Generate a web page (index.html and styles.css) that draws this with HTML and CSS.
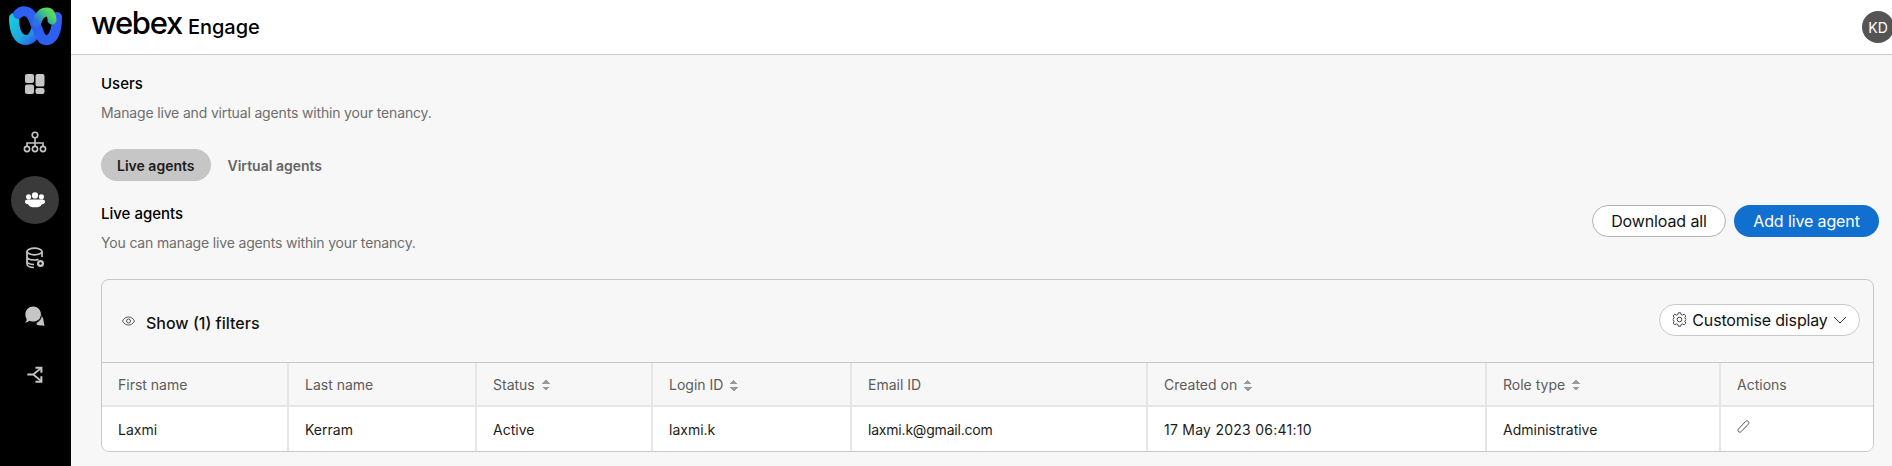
FILE: index.html
```html
<!DOCTYPE html>
<html lang="en">
<head>
    <meta charset="UTF-8">
    <title>Webex Engage - Users</title>
    <link rel="stylesheet" href="styles.css">
</head>
<body>

<div class="app">
    <nav class="sidebar">
        <div class="logo">
            <svg width="54" height="42" viewBox="0 0 54 42" fill="none">
                <defs>
                    <linearGradient id="logo-cyan" x1="0" y1="0" x2="1" y2="1">
                        <stop offset="0" stop-color="#18c8dc"/>
                        <stop offset="0.6" stop-color="#1ea8e0"/>
                        <stop offset="1" stop-color="#2a62ee"/>
                    </linearGradient>
                    <linearGradient id="logo-green" x1="0" y1="1" x2="1" y2="0.3">
                        <stop offset="0" stop-color="#2f6fe0"/>
                        <stop offset="0.5" stop-color="#2fb09a"/>
                        <stop offset="1" stop-color="#58d860"/>
                    </linearGradient>
                </defs>
                <path d="M6 13C6 26 10 35 18 35C23 35 26 31 28 25" stroke="url(#logo-cyan)" stroke-width="10" stroke-linecap="round"/>
                <path d="M10 9C15 4 22 6 25 13L31 28C33 33 36 36 40 35C46 33 49 24 49 12" stroke="#2d5ff0" stroke-width="10" stroke-linecap="round"/>
                <path d="M29 17C31 10 35 7 39 7C42 7 44 10 44 15" stroke="url(#logo-green)" stroke-width="9" stroke-linecap="round"/>
            </svg>
        </div>
        <a class="nav-item">
            <svg width="22" height="22" viewBox="0 0 22 22" fill="#c6c6c6">
                <rect x="1" y="1" width="9" height="9" rx="2"/>
                <rect x="11.500" y="1" width="9" height="12.500" rx="2"/>
                <rect x="1" y="11.500" width="9" height="9.500" rx="2"/>
                <rect x="11.500" y="15" width="9" height="6" rx="2"/>
            </svg>
        </a>
        <a class="nav-item">
            <svg width="24" height="22" viewBox="0 0 24 22" fill="none" stroke="#c6c6c6" stroke-width="1.600">
                <circle cx="12" cy="4" r="2.800"/>
                <path d="M12 7V12M4 15V12H20V15M12 12V15"/>
                <circle cx="4" cy="18" r="2.600"/>
                <circle cx="12" cy="18" r="2.600"/>
                <circle cx="20" cy="18" r="2.600"/>
            </svg>
        </a>
        <a class="nav-item active">
            <span class="nav-circle">
                <svg width="22" height="18" viewBox="0 0 24 18" fill="#fff">
                    <circle cx="12" cy="4" r="3.400"/>
                    <circle cx="5" cy="5.500" r="2.800"/>
                    <circle cx="19" cy="5.500" r="2.800"/>
                    <path d="M1 10.500C1 9 3 8.500 5 8.500H19C21 8.500 23 9 23 10.500C23 12.500 21.500 13.500 19.500 13.500C18.500 16 15.500 17 12 17C8.500 17 5.500 16 4.500 13.500C2.500 13.500 1 12.500 1 10.500Z"/>
                </svg>
            </span>
        </a>
        <a class="nav-item">
            <svg width="20" height="22" viewBox="0 0 20 22" fill="none" stroke="#c6c6c6" stroke-width="1.700">
                <ellipse cx="9.500" cy="4.500" rx="7.500" ry="3.300"/>
                <path d="M2 4.500V17C2 19 5 20.500 9 20.500M17 4.500V10M2 9.500C2 11.500 5 13 9.500 13C11 13 12.500 12.800 13.500 12.400M2 14C2 16 5 17.500 9 17.500"/>
                <circle cx="15.500" cy="16.500" r="3.500" fill="#c6c6c6" stroke="none"/>
                <circle cx="15.500" cy="16.500" r="1.200" fill="#000" stroke="none"/>
            </svg>
        </a>
        <a class="nav-item">
            <svg width="22" height="22" viewBox="0 0 24 24">
                <path d="M22.500 22.500L16 22C14 22 13 21 14 19C17 17 19 14 19 11L21 15C21.500 18 21.500 20 22.500 22.500Z" fill="#c6c6c6"/>
                <path d="M1 19C2.500 18 3 17 2.800 15C1.800 13.500 1.500 11.500 1.500 10C1.500 5 5.500 1.500 10 1.500C14.500 1.500 18.500 5 18.500 10C18.500 14.500 15 18 10 18C8 18 6.500 17.800 5.500 17.200C4.500 18.500 3 19.200 1 19Z" fill="#c6c6c6"/>
                <path d="M19 12C18.500 15.500 16.500 18 13.500 19" fill="none" stroke="#000" stroke-width="1"/>
            </svg>
        </a>
        <a class="nav-item">
            <svg width="18" height="17" viewBox="0 0 20 20" fill="none" stroke="#c6c6c6" stroke-width="2.200">
                <path d="M1 10H8L17 2.500M8 10L17 17.500"/>
                <path d="M10.500 2H17.500V8M17.500 12V18.500H10.500" stroke-width="2.400"/>
            </svg>
        </a>
    </nav>

    <div class="main">
        <header class="topbar">
            <div class="brand">
                <span class="wordmark">webex</span>
                <span class="product">Engage</span>
            </div>
            <div class="avatar">KD</div>
        </header>

        <div class="content">
            <h2 class="page-title">Users</h2>
            <p class="page-desc">Manage live and virtual agents within your tenancy.</p>

            <div class="tabs">
                <button class="tab tab-active">Live agents</button>
                <button class="tab">Virtual agents</button>
            </div>

            <div class="section-head">
                <div>
                    <h3 class="section-title">Live agents</h3>
                    <p class="section-desc">You can manage live agents within your tenancy.</p>
                </div>
                <div class="section-actions">
                    <button class="btn btn-outline">Download all</button>
                    <button class="btn btn-primary">Add live agent</button>
                </div>
            </div>

            <div class="card">
                <div class="card-head">
                    <div class="filters">
                        <svg class="eye" width="13" height="10" viewBox="0 0 13 10" fill="none" stroke="#444" stroke-width="0.900">
                            <path d="M0.500 5C2 2.200 4 1 6.500 1C9 1 11 2.200 12.500 5C11 7.800 9 9 6.500 9C4 9 2 7.800 0.500 5Z"/>
                            <circle cx="6.500" cy="5" r="2"/>
                        </svg>
                        <span>Show (1) filters</span>
                    </div>
                    <button class="customise">
                        <svg width="15" height="15" viewBox="0 0 15 15" fill="none" stroke="#444" stroke-width="1">
                            <circle cx="7.500" cy="7.500" r="2.300"/>
                            <path d="M6.300 0.800H8.700L9.100 2.500L10.600 3.100L12.100 2.200L13.800 3.900L12.900 5.400L13.500 6.900L14.200 7.500L13.500 8.100L12.900 9.600L13.800 11.100L12.100 12.800L10.600 11.900L9.100 12.500L8.700 14.200H6.300L5.900 12.500L4.400 11.900L2.900 12.800L1.200 11.100L2.100 9.600L1.500 8.100L0.800 7.500L1.500 6.900L2.100 5.400L1.200 3.900L2.900 2.200L4.400 3.100L5.900 2.500Z"/>
                        </svg>
                        <span>Customise display</span>
                        <svg width="14" height="8" viewBox="0 0 14 8" fill="none" stroke="#333" stroke-width="1">
                            <path d="M1 1L7 7L13 1"/>
                        </svg>
                    </button>
                </div>

                <table class="users-table">
                    <colgroup>
                        <col class="col-first">
                        <col class="col-last">
                        <col class="col-status">
                        <col class="col-login">
                        <col class="col-email">
                        <col class="col-created">
                        <col class="col-role">
                        <col class="col-actions">
                    </colgroup>
                    <thead>
                        <tr>
                            <th>First name</th>
                            <th>Last name</th>
                            <th>Status<span class="sort"></span></th>
                            <th>Login ID<span class="sort"></span></th>
                            <th>Email ID</th>
                            <th>Created on<span class="sort"></span></th>
                            <th>Role type<span class="sort"></span></th>
                            <th>Actions</th>
                        </tr>
                    </thead>
                    <tbody>
                        <tr>
                            <td>Laxmi</td>
                            <td>Kerram</td>
                            <td>Active</td>
                            <td>laxmi.k</td>
                            <td class="cell-email">laxmi.k@gmail.com</td>
                            <td class="cell-date">17 May 2023 06:41:10</td>
                            <td>Administrative</td>
                            <td>
                                <svg class="edit" width="13" height="13" viewBox="0 0 13 13" fill="none" stroke="#444" stroke-width="0.900">
                                    <path d="M1.500 9L8.500 1.500C9.300 0.700 10.500 0.700 11.300 1.500C12.100 2.300 12.100 3.400 11.300 4.200L4.300 11.500C3.500 12.300 2.300 12.500 1.500 11.700C0.800 11 0.800 9.800 1.500 9Z"/>
                                </svg>
                            </td>
                        </tr>
                    </tbody>
                </table>
            </div>
        </div>
    </div>
</div>

</body>
</html>
```

FILE: styles.css
```css
* {
    box-sizing: border-box;
}

html, body {
    height: 100%;
    margin: 0;
    overflow: hidden;
}

body {
    font-family: 'Inter', 'Liberation Sans', sans-serif;
    background-color: #f7f7f7;
    color: #121212;
}

.app {
    display: flex;
    height: 100%;
}

/* left nav */
.sidebar {
    width: 71px;
    flex-shrink: 0;
    padding-right: 1px;
    background-color: #000;
}

.logo {
    height: 55px;
    display: flex;
    justify-content: center;
    padding-top: 5px;
}

.nav-item {
    height: 58px;
    display: flex;
    align-items: center;
    justify-content: center;
}

.nav-circle {
    width: 48px;
    height: 48px;
    border-radius: 50%;
    background-color: #3a3a3a;
    display: flex;
    align-items: center;
    justify-content: center;
}

.main {
    flex: 1;
    min-width: 0;
    display: flex;
    flex-direction: column;
}

/* top bar */
.topbar {
    height: 55px;
    background-color: #fff;
    border-bottom: 1px solid #c8c8c8;
    display: flex;
    align-items: center;
    justify-content: space-between;
}

.brand {
    display: flex;
    align-items: baseline;
    margin-left: 20px;
    margin-top: -10px;
    gap: 6px;
}

.wordmark {
    font-size: 31px;
    font-weight: 500;
    letter-spacing: -1.300px;
    color: #000;
}

.product {
    font-size: 20px;
    font-weight: 500;
    color: #000;
}

.avatar {
    width: 32px;
    height: 32px;
    margin-right: -2px;
    border-radius: 50%;
    background-color: #545454;
    color: #fff;
    font-size: 14px;
    display: flex;
    align-items: center;
    justify-content: center;
}

/* page content */
.content {
    flex: 1;
    padding: 19px 18px 0 30px;
}

.page-title,
.section-title {
    margin: 0;
    font-size: 15px;
    line-height: 20px;
    font-weight: 500;
    color: #000;
}

.page-desc,
.section-desc {
    margin: 9px 0 0;
    font-size: 14px;
    line-height: 20px;
    letter-spacing: -0.160px;
    color: #6e6e6e;
}

.tabs {
    display: flex;
    gap: 1px;
    margin-top: 26px;
}

.tab {
    height: 32px;
    padding: 0 16px;
    border: none;
    border-radius: 16px;
    background: none;
    font-family: inherit;
    font-size: 14px;
    font-weight: 600;
    color: #666;
}

.tab-active {
    background-color: #c6c6c6;
    color: #1c1c1c;
}

.section-head {
    display: flex;
    justify-content: space-between;
    align-items: flex-start;
    margin-top: 23px;
}

.section-actions {
    display: flex;
    gap: 8px;
    margin-top: 1px;
    margin-right: -5px;
}

.btn {
    height: 32px;
    border-radius: 16px;
    font-family: inherit;
    font-size: 16px;
    letter-spacing: -0.120px;
}

.btn-outline {
    width: 134px;
    background-color: #fff;
    border: 1px solid #b2b2b2;
    color: #121212;
}

.btn-primary {
    width: 145px;
    background-color: #1170cf;
    border: none;
    color: #fff;
}

/* table card */
.card {
    margin-top: 26px;
    border: 1px solid #c8c8c8;
    border-radius: 8px;
    overflow: hidden;
}

.card-head {
    height: 83px;
    display: flex;
    align-items: center;
    justify-content: space-between;
    padding: 0 13px 0 20px;
    border-bottom: 1px solid #c8c8c8;
}

.filters {
    display: flex;
    align-items: center;
    gap: 11px;
    font-size: 16px;
    font-weight: 500;
    margin-top: 4px;
}

.eye {
    margin-top: -4px;
}

.customise {
    height: 32px;
    width: 201px;
    margin-top: -3px;
    display: flex;
    align-items: center;
    justify-content: center;
    gap: 5px;
    border: 1px solid #c8c8c8;
    border-radius: 16px;
    background-color: #fff;
    font-family: inherit;
    font-size: 16px;
    letter-spacing: -0.150px;
    color: #121212;
}

.users-table {
    width: 100%;
    table-layout: fixed;
    border-collapse: collapse;
}

.col-first { width: 186px; }
.col-last { width: 188px; }
.col-status { width: 176px; }
.col-login { width: 199px; }
.col-email { width: 296px; }
.col-created { width: 339px; }
.col-role { width: 234px; }

.users-table th,
.users-table td {
    padding: 0 16px;
    text-align: left;
    font-size: 14px;
    font-weight: 400;
    border-right: 2px solid #e6e6e6;
}

.users-table th:last-child,
.users-table td:last-child {
    border-right: none;
}

.users-table th {
    height: 43px;
    color: #5c5c5c;
    border-bottom: 2px solid #e6e6e6;
}

.users-table td {
    height: 45px;
    background-color: #fff;
    color: #1c1c1c;
}

.cell-email {
    letter-spacing: -0.200px;
}

.cell-date {
    letter-spacing: 0.250px;
}

.sort {
    display: inline-block;
    width: 8px;
    height: 11px;
    margin-left: 7px;
    vertical-align: -1px;
    background:
        linear-gradient(to top right, transparent 50%, #9a9a9a 50%) 0 7px / 4px 4px no-repeat,
        linear-gradient(to top left, transparent 50%, #9a9a9a 50%) 4px 7px / 4px 4px no-repeat,
        linear-gradient(to bottom right, transparent 50%, #9a9a9a 50%) 0 0 / 4px 4px no-repeat,
        linear-gradient(to bottom left, transparent 50%, #9a9a9a 50%) 4px 0 / 4px 4px no-repeat;
}

.edit {
    display: block;
    margin-top: -5px;
}
```
